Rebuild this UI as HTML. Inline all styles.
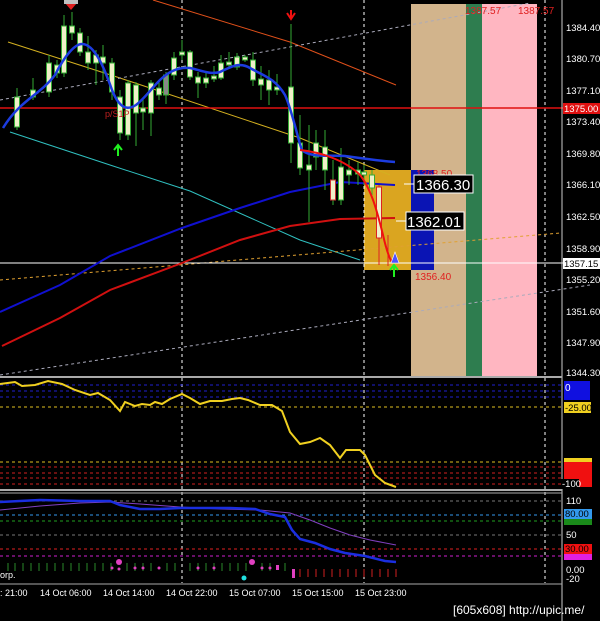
<!DOCTYPE html><html><head><style>
body{margin:0;background:#000;width:600px;height:621px;overflow:hidden}
svg{display:block}
text{font-family:"Liberation Sans",sans-serif}
</style></head><body>
<svg width="600" height="621" viewBox="0 0 600 621" font-size="10" xmlns="http://www.w3.org/2000/svg">
<rect width="600" height="621" fill="#000"/>
<rect x="411" y="4" width="55" height="372" fill="#d2b48c"/>
<rect x="466" y="4" width="16" height="372" fill="#2e7d4f"/>
<rect x="482" y="4" width="55" height="372" fill="#ffb6c1"/>
<rect x="364" y="170" width="47" height="100" fill="#daa520"/>
<rect x="411" y="170" width="23" height="100" fill="#0a14b4"/>
<g stroke="#fff" stroke-dasharray="3,3" stroke-width="1">
<line x1="182" y1="0" x2="182" y2="583"/><line x1="364" y1="0" x2="364" y2="583"/><line x1="545" y1="0" x2="545" y2="583"/>
</g>
<polyline points="153,0 290,42 396,85" fill="none" stroke="#e0501a" stroke-width="1"/>
<polyline points="8,42 120,78 300,138 390,175" fill="none" stroke="#d4b020" stroke-width="1"/>
<polyline points="10,132 110,165 190,191 300,240 360,260" fill="none" stroke="#30c0c0" stroke-width="1"/>
<line x1="0" y1="100" x2="530" y2="3" stroke="#aab" stroke-dasharray="3,3"/>
<line x1="0" y1="375" x2="590" y2="285" stroke="#aab" stroke-dasharray="3,3"/>
<line x1="0" y1="280" x2="560" y2="233" stroke="#e0a030" stroke-dasharray="3,3"/>
<line x1="0" y1="108" x2="600" y2="108" stroke="#e01010" stroke-width="1.5"/>
<line x1="0" y1="263" x2="600" y2="263" stroke="#fff" stroke-width="1"/>
<polyline points="0,312 60,285 110,256 182,228 240,208 290,192 340,182 395,185" fill="none" stroke="#1010d0" stroke-width="2"/>
<polyline points="2,346 60,318 110,290 182,263 240,240 290,226 340,219 395,218" fill="none" stroke="#d01010" stroke-width="2"/>
<g stroke="#3a3" stroke-width="1" fill="#f0f0c8">
<line x1="17" y1="88" x2="17" y2="130"/><rect x="14.5" y="97" width="5" height="30"/>
<line x1="33" y1="78" x2="33" y2="100"/><rect x="30.5" y="90" width="5" height="7"/>
<line x1="49" y1="55" x2="49" y2="97"/><rect x="46.5" y="63" width="5" height="29"/>
<line x1="57" y1="60" x2="57" y2="78"/><rect x="54.5" y="65" width="5" height="8"/>
<line x1="64" y1="15" x2="64" y2="77"/><rect x="61.5" y="26" width="5" height="47"/>
<line x1="72" y1="12" x2="72" y2="40"/><rect x="69.5" y="26" width="5" height="7"/>
<line x1="80" y1="28" x2="80" y2="56"/><rect x="77.5" y="33" width="5" height="19"/>
<line x1="88" y1="36" x2="88" y2="70"/><rect x="85.5" y="52" width="5" height="11"/>
<line x1="96" y1="50" x2="96" y2="85"/><rect x="93.5" y="55" width="5" height="8"/>
<line x1="103" y1="45" x2="103" y2="80"/><rect x="100.5" y="57" width="5" height="6"/>
<line x1="112" y1="58" x2="112" y2="100"/><rect x="109.5" y="63" width="5" height="29"/>
<line x1="120" y1="90" x2="120" y2="140"/><rect x="117.5" y="97" width="5" height="36"/>
<line x1="128" y1="80" x2="128" y2="140"/><rect x="125.5" y="83" width="5" height="52"/>
<line x1="136" y1="82" x2="136" y2="146"/><rect x="133.5" y="85" width="5" height="28"/>
<line x1="143" y1="100" x2="143" y2="130"/><rect x="140.5" y="108" width="5" height="4"/>
<line x1="151" y1="80" x2="151" y2="136"/><rect x="148.5" y="83" width="5" height="30"/>
<line x1="159" y1="80" x2="159" y2="100"/><rect x="156.5" y="88" width="5" height="7"/>
<line x1="166" y1="72" x2="166" y2="104"/><rect x="163.5" y="75" width="5" height="20" fill="#888"/>
<line x1="174" y1="52" x2="174" y2="80"/><rect x="171.5" y="58" width="5" height="17"/>
<line x1="182" y1="40" x2="182" y2="60"/><rect x="179.5" y="52" width="5" height="3"/>
<line x1="190" y1="50" x2="190" y2="80"/><rect x="187.5" y="52" width="5" height="25"/>
<line x1="198" y1="72" x2="198" y2="98"/><rect x="195.5" y="77" width="5" height="6"/>
<line x1="206" y1="72" x2="206" y2="88"/><rect x="203.5" y="78" width="5" height="5"/>
<line x1="214" y1="66" x2="214" y2="82"/><rect x="211.5" y="76" width="5" height="3"/>
<line x1="221" y1="55" x2="221" y2="80"/><rect x="218.5" y="63" width="5" height="15"/>
<line x1="229" y1="52" x2="229" y2="68"/><rect x="226.5" y="62" width="5" height="3"/>
<line x1="237" y1="53" x2="237" y2="70"/><rect x="234.5" y="57" width="5" height="10"/>
<line x1="245" y1="55" x2="245" y2="62"/><rect x="242.5" y="57" width="5" height="3"/>
<line x1="253" y1="52" x2="253" y2="86"/><rect x="250.5" y="60" width="5" height="20"/>
<line x1="261" y1="66" x2="261" y2="100"/><rect x="258.5" y="79" width="5" height="6"/>
<line x1="269" y1="70" x2="269" y2="105"/><rect x="266.5" y="80" width="5" height="10"/>
<line x1="277" y1="74" x2="277" y2="95"/><rect x="274.5" y="87" width="5" height="3"/>
<line x1="291" y1="24" x2="291" y2="163"/><rect x="288.5" y="87" width="5" height="56"/>
<line x1="300" y1="115" x2="300" y2="175"/><rect x="297.5" y="143" width="5" height="25"/>
<line x1="309" y1="125" x2="309" y2="222"/><rect x="306.5" y="165" width="5" height="5"/>
<line x1="316" y1="130" x2="316" y2="170"/><rect x="313.5" y="143" width="5" height="14"/>
<line x1="325" y1="130" x2="325" y2="190"/><rect x="322.5" y="147" width="5" height="23"/>
<line x1="333" y1="160" x2="333" y2="205"/><rect x="330.5" y="180" width="5" height="20" stroke="#c33"/>
<line x1="341" y1="148" x2="341" y2="205"/><rect x="338.5" y="167" width="5" height="33"/>
<line x1="349" y1="160" x2="349" y2="185"/><rect x="346.5" y="170" width="5" height="5"/>
<line x1="358" y1="162" x2="358" y2="185"/><rect x="355.5" y="170" width="5" height="4"/>
<line x1="364" y1="165" x2="364" y2="185"/><rect x="361.5" y="172" width="5" height="3"/>
<line x1="372" y1="170" x2="372" y2="195"/><rect x="369.5" y="175" width="5" height="13"/>
<line x1="379" y1="185" x2="379" y2="265" stroke="#d22"/><rect x="376.5" y="187" width="5" height="51" stroke="#d22"/>
<line x1="388" y1="235" x2="388" y2="266" stroke="#d22"/>
</g>
<path d="M3,128 C20,100 40,95 55,75 C65,55 75,44 82,44 C95,44 105,70 112,90 C120,110 128,110 136,105 C145,98 150,90 160,80 C170,70 180,67 190,68 C200,70 210,75 220,72 C232,66 240,62 250,68 C262,75 275,78 285,95 C292,110 298,140 302,150 C310,158 330,155 345,156 C360,158 380,161 395,162" fill="none" stroke="#1c3ce0" stroke-width="2.5"/>
<path d="M300,150 C320,152 345,160 360,175 C372,190 378,215 383,235 C386,248 389,258 392,262" fill="none" stroke="#f01010" stroke-width="2"/>
<path d="M65,3 L71,10 L77,3 Z" fill="#e02020"/><rect x="64" y="0" width="14" height="4" fill="#c0c0c0"/>
<path d="M287,13 L291,19 L295,13 M291,10 L291,19" stroke="#f01010" stroke-width="2" fill="none"/>
<path d="M114,150 L118,145 L122,150 M118,145 L118,156" stroke="#20f020" stroke-width="2" fill="none"/>
<path d="M390,270 L394,265 L398,270 M394,265 L394,277" stroke="#20f020" stroke-width="2" fill="none"/>
<path d="M391,263 L395,252 L399,263 Z" fill="#5050ff" stroke="#fff" stroke-width="0.6"/>
<text x="105" y="117" fill="#c02020" font-size="9">p/S1P</text>
<text x="465" y="14" fill="#e02020">1387.57</text>
<text x="518" y="14" fill="#e02020">1387.57</text>
<text x="416" y="177" fill="#e02020">1368.50</text>
<text x="415" y="280" fill="#e02020">1356.40</text>
<line x1="404" y1="184" x2="414" y2="184" stroke="#fff"/>
<rect x="414" y="175" width="59" height="18" fill="#000" stroke="#fff"/>
<text x="416" y="190" fill="#fff" font-size="15">1366.30</text>
<line x1="396" y1="221" x2="406" y2="221" stroke="#fff"/>
<rect x="406" y="212" width="58" height="18" fill="#000" stroke="#fff"/>
<text x="407" y="227" fill="#fff" font-size="15">1362.01</text>
<g fill="#fff" font-size="9.5">
<text x="566" y="31">1384.40</text><text x="566" y="62">1380.70</text><text x="566" y="94">1377.10</text>
<text x="566" y="125">1373.40</text><text x="566" y="157">1369.80</text><text x="566" y="188">1366.10</text>
<text x="566" y="220">1362.50</text><text x="566" y="252">1358.90</text><text x="566" y="283">1355.20</text>
<text x="566" y="315">1351.60</text><text x="566" y="346">1347.90</text><text x="566" y="376">1344.30</text>
</g>
<rect x="563" y="103" width="37" height="11" fill="#e01010"/><text x="564" y="112" fill="#fff" font-size="9.5">1375.00</text>
<rect x="563" y="258" width="37" height="11" fill="#fff"/><text x="564" y="267" fill="#000" font-size="9.5">1357.15</text>
<line x1="562" y1="0" x2="562" y2="621" stroke="#ccc"/>
<line x1="0" y1="377" x2="562" y2="377" stroke="#aaa" stroke-width="2"/>
<line x1="0" y1="490" x2="562" y2="490" stroke="#aaa" stroke-width="2"/>
<g stroke-dasharray="3,3" stroke-width="1">
<line x1="0" y1="385" x2="562" y2="385" stroke="#2020d0"/><line x1="0" y1="391" x2="562" y2="391" stroke="#2020d0"/><line x1="0" y1="397" x2="562" y2="397" stroke="#2020d0"/>
<line x1="0" y1="407" x2="562" y2="407" stroke="#e0c020"/><line x1="0" y1="462" x2="562" y2="462" stroke="#e0c020"/>
<line x1="0" y1="467" x2="562" y2="467" stroke="#d02020"/><line x1="0" y1="473" x2="562" y2="473" stroke="#d02020"/><line x1="0" y1="478" x2="562" y2="478" stroke="#d02020"/><line x1="0" y1="484" x2="562" y2="484" stroke="#d02020"/>
</g>
<polyline points="0,384 15,382 22,386 35,385 48,381 62,384 75,390 90,395 98,393 110,400 120,411 125,402 135,406 142,404 150,405 155,402 162,404 170,399 182,394 190,398 200,404 210,401 222,401 232,399 240,398 248,400 260,405 272,405 282,411 290,432 300,444 310,442 320,438 330,445 340,458 346,450 360,450 365,455 375,475 385,483 396,487" fill="none" stroke="#f0d020" stroke-width="2"/>
<rect x="564" y="381" width="26" height="19" fill="#1010e0"/><text x="565" y="391" fill="#fff">0</text>
<rect x="564" y="402" width="27" height="11" fill="#f0d020"/><text x="565" y="411" fill="#000" font-size="9.5">-25.00</text>
<rect x="564" y="458" width="28" height="29" fill="#f01010"/><rect x="564" y="458" width="28" height="4" fill="#f0d020"/>
<rect x="561" y="479" width="18" height="10" fill="#000"/><text x="562" y="487" fill="#fff" font-size="9.5">-100</text>
<line x1="0" y1="493" x2="562" y2="493" stroke="#aaa"/>
<line x1="0" y1="584" x2="562" y2="584" stroke="#aaa"/>
<g stroke-dasharray="3,3" stroke-width="1">
<line x1="0" y1="501" x2="562" y2="501" stroke="#777"/><line x1="0" y1="515" x2="562" y2="515" stroke="#3399ee"/>
<line x1="0" y1="521" x2="562" y2="521" stroke="#20a020"/><line x1="0" y1="535" x2="562" y2="535" stroke="#777"/>
<line x1="0" y1="549" x2="562" y2="549" stroke="#e02020"/><line x1="0" y1="556" x2="562" y2="556" stroke="#d020d0"/>
</g>
<polyline points="0,510 40,506 80,503 110,502 140,504 180,507 220,509 260,510 290,513 310,520 330,528 350,535 370,540 396,545" fill="none" stroke="#8040c0" stroke-width="1"/>
<polyline points="0,502 40,500 80,501 110,501 120,505 140,509 160,509 180,508 230,508 255,509 270,514 285,517 292,530 300,539 315,543 330,549 345,553 365,556 385,561 396,562" fill="none" stroke="#1a2ee0" stroke-width="2.5"/>
<g stroke="#2a8a2a">
<path d="M8,563v8M15,563v8M23,563v8M31,563v8M39,563v8M47,563v8M55,563v8M63,563v8M71,563v8M79,563v8M87,563v8M95,563v8M103,563v8M111,563v8M127,563v8M135,563v8M143,563v8M151,563v8M167,563v8M175,563v8M190,563v8M198,563v8M206,563v8M214,563v8M222,563v8M230,563v8M238,563v8M246,563v8M262,563v8M270,563v8M285,563v8"/>
</g>
<g stroke="#d02020"><path d="M300,569v8M308,569v8M316,569v8M324,569v8M332,569v8M340,569v8M348,569v8M356,569v8M364,569v8M372,569v8M380,569v8M388,569v8M396,569v8"/></g>
<g fill="#e040c0"><circle cx="119" cy="562" r="3"/><circle cx="252" cy="562" r="3"/><rect x="276" y="565" width="3" height="5"/><rect x="292" y="569" width="3" height="9"/>
<circle cx="112" cy="568" r="1.5"/><circle cx="119" cy="569" r="1.5"/><circle cx="135" cy="568" r="1.5"/><circle cx="143" cy="568" r="1.5"/><circle cx="159" cy="568" r="1.5"/><circle cx="198" cy="568" r="1.5"/><circle cx="214" cy="568" r="1.5"/><circle cx="262" cy="568" r="1.5"/><circle cx="270" cy="568" r="1.5"/></g>
<circle cx="244" cy="578" r="2.5" fill="#20e0e0"/>
<text x="0" y="578" fill="#fff" font-size="9">orp.</text>
<g fill="#fff" font-size="9.5"><text x="566" y="504">110</text><text x="566" y="538">50</text><text x="566" y="573">0.00</text><text x="566" y="582">-20</text></g>
<rect x="564" y="509" width="28" height="10" fill="#3399ee"/><text x="565" y="517" fill="#000" font-size="9.5">80.00</text>
<rect x="564" y="519" width="28" height="6" fill="#1a8a1a"/>
<rect x="564" y="544" width="28" height="10" fill="#f01010"/><text x="565" y="552" fill="#000" font-size="9.5">30.00</text>
<rect x="564" y="554" width="28" height="6" fill="#e020e0"/>
<g fill="#fff" font-size="9">
<text x="0" y="596">: 21:00</text><text x="40" y="596">14 Oct 06:00</text><text x="103" y="596">14 Oct 14:00</text>
<text x="166" y="596">14 Oct 22:00</text><text x="229" y="596">15 Oct 07:00</text><text x="292" y="596">15 Oct 15:00</text><text x="355" y="596">15 Oct 23:00</text>
</g>
<text x="453" y="614" fill="#fff" font-size="12">[605x608] http://upic.me/</text>
</svg>
</body></html>
